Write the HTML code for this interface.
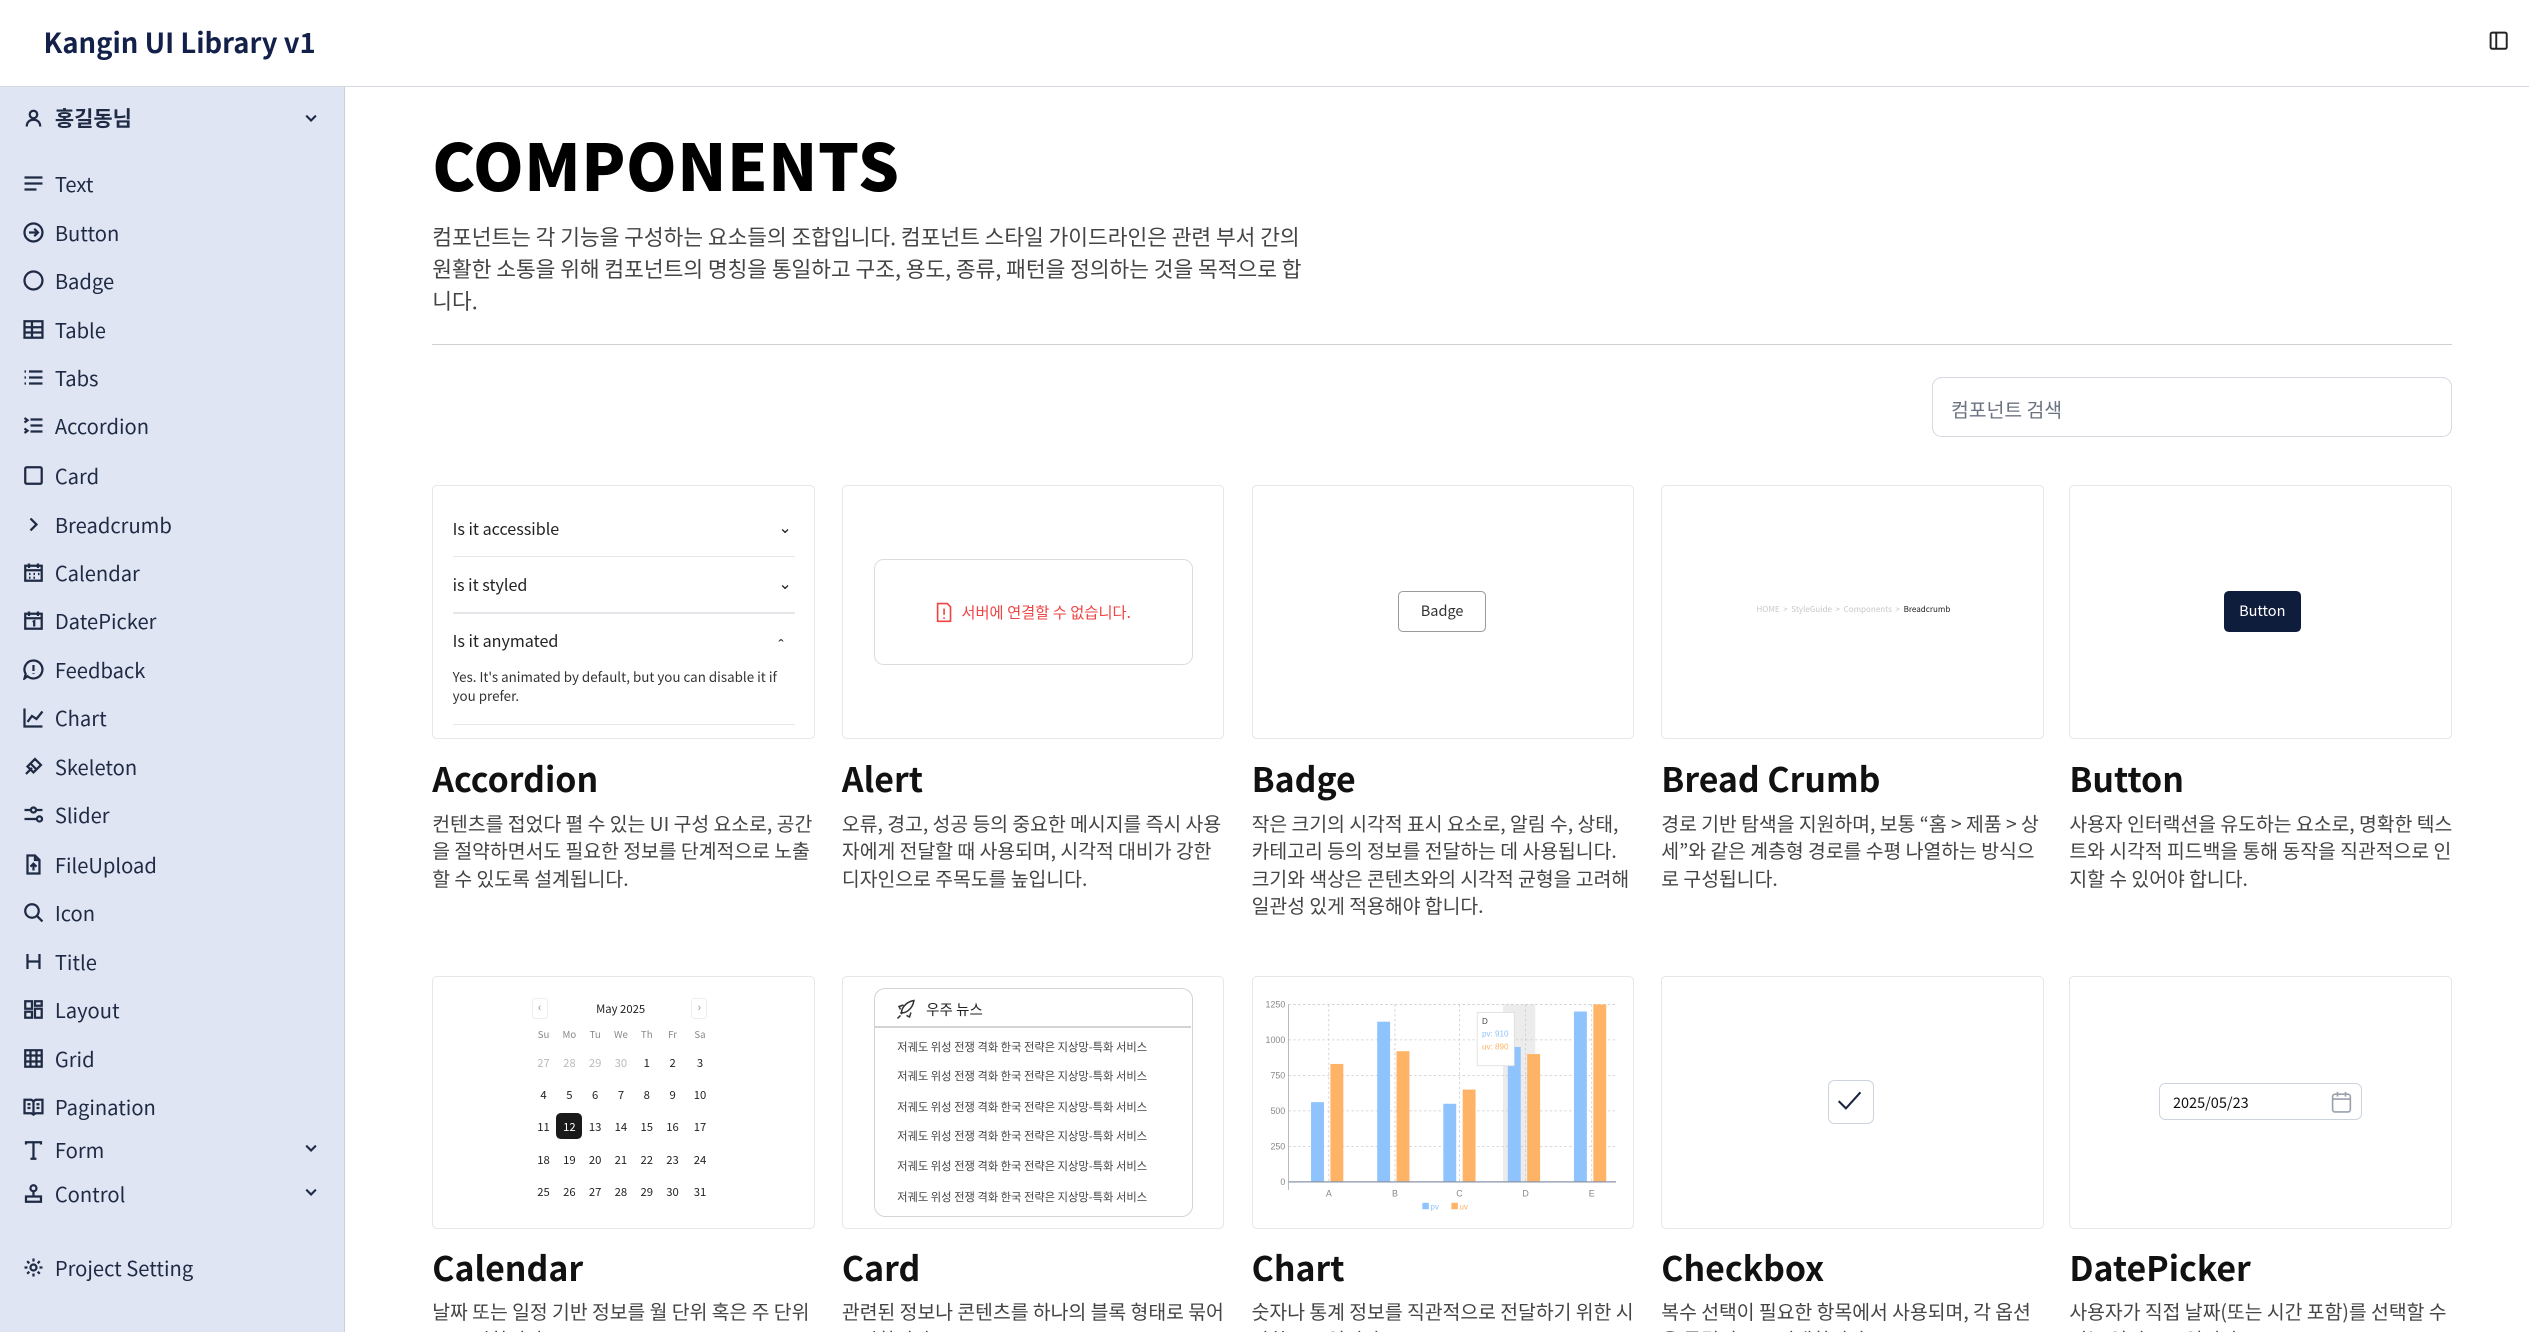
<!DOCTYPE html>
<html><head><meta charset="utf-8"><style>
*{box-sizing:border-box;margin:0;padding:0}
html,body{width:2529px;height:1332px;overflow:hidden;background:#fff}
#root{zoom:1.6129;width:1568px;height:826px;position:relative;font-family:"Noto Sans CJK KR","Liberation Sans",sans-serif;color:#1f2a44}
.hdr{position:absolute;left:0;top:0;width:1568px;height:54px;border-bottom:1px solid #d6d9e0;background:#fff}
.hdr h1{position:absolute;left:27px;top:13px;font-size:17px;font-weight:700;color:#12204a}
.side{position:absolute;left:0;top:54px;width:214px;height:772px;background:#dfe5f2;border-right:1px solid #c9cfdc}
.si{position:absolute;left:14px;font-size:12.5px;color:#1f2a44;display:flex;align-items:center;height:18px}
.si svg{width:13px;height:13px;margin-right:7px;stroke:#1f2a44;fill:none;stroke-width:1.5}
.chev{position:absolute;left:188px;width:10px;height:10px}
.title{position:absolute;left:268px;top:72px;font-size:40px;font-weight:900;color:#000;letter-spacing:0.3px}
.intro{position:absolute;left:268px;top:137px;width:548px;font-size:13.3px;line-height:20px;color:#444}
.hr{position:absolute;left:268px;top:213px;width:1252px;height:1px;background:#d0d0d0}
.search{position:absolute;left:1198px;top:234px;width:322px;height:37px;border:1px solid #d5d9e0;border-radius:6px;font-size:12px;color:#6b7280;padding:10px 11px}
.card{position:absolute;width:237px;height:157px;border:1px solid #e6e7ea;border-radius:3px;background:#fff;overflow:hidden}
.ct{position:absolute;font-size:21px;font-weight:700;color:#111}
.cd{position:absolute;width:238px;font-size:12px;line-height:17px;color:#444}
.acc{position:absolute;left:12px;font-size:10px;color:#222}
.accl{position:absolute;left:12px;width:212px;height:1px;background:#e4e6ea}
.cal{position:absolute;font-size:7px;color:#222;width:14px;text-align:center}
.news{position:absolute;left:14px;font-size:7px;color:#444}
</style></head><body><div id="root">
<div class="hdr"><h1>Kangin UI Library v1</h1>
<svg style="position:absolute;left:1543px;top:19px" width="12" height="12" viewBox="0 0 12 12" fill="none" stroke="#222" stroke-width="1.2"><rect x="1" y="1" width="10" height="10" rx="1"/><line x1="4.5" y1="1" x2="4.5" y2="11"/></svg></div>
<div class="side"></div>
<div class="si" style="top:64px;font-weight:700;font-size:13px"><svg viewBox="0 0 14 14"><circle cx="7" cy="5" r="2.5"/><path d="M2.5 13c0-3 2-4.5 4.5-4.5s4.5 1.5 4.5 4.5"/></svg>홍길동님</div>
<svg class="chev" style="top:68px" viewBox="0 0 10 10" fill="none" stroke="#1f2a44" stroke-width="1.3"><path d="M2 3.5l3 3 3-3"/></svg>
<div class="si" style="top:105px"><svg viewBox="0 0 14 14"><path d="M1 3h12M1 7h12M1 11h8"/></svg>Text</div>
<div class="si" style="top:135px"><svg viewBox="0 0 14 14"><circle cx="7" cy="7" r="6"/><path d="M4 7h6M7.5 4.5L10 7l-2.5 2.5"/></svg>Button</div>
<div class="si" style="top:165px"><svg viewBox="0 0 14 14"><circle cx="7" cy="7" r="6"/></svg>Badge</div>
<div class="si" style="top:195px"><svg viewBox="0 0 14 14"><rect x="1" y="1.5" width="12" height="11"/><path d="M1 5.5h12M1 9h12M6 1.5v11"/></svg>Table</div>
<div class="si" style="top:225px"><svg viewBox="0 0 14 14"><path d="M1 3h1M1 7h1M1 11h1M4 3h9M4 7h9M4 11h9"/></svg>Tabs</div>
<div class="si" style="top:255px"><svg viewBox="0 0 14 14"><path d="M1 2l2 1.5L1 5M1 9l2 1.5L1 12M5 3h8M5 7h8M5 11h8"/></svg>Accordion</div>
<div class="si" style="top:286px"><svg viewBox="0 0 14 14"><rect x="1.5" y="1.5" width="11" height="11" rx="1"/></svg>Card</div>
<div class="si" style="top:316px"><svg viewBox="0 0 14 14"><path d="M5 3l4 4-4 4"/></svg>Breadcrumb</div>
<div class="si" style="top:346px"><svg viewBox="0 0 14 14"><rect x="1.5" y="2.5" width="11" height="10"/><path d="M1.5 5.5h11M4 1v3M10 1v3M4 8h1M7 8h1M10 8h1M4 10.5h1M7 10.5h1"/></svg>Calendar</div>
<div class="si" style="top:376px"><svg viewBox="0 0 14 14"><rect x="1.5" y="2.5" width="11" height="10"/><path d="M1.5 5.5h11M4 1v3M10 1v3M6.5 8l1-.5v3.5"/></svg>DatePicker</div>
<div class="si" style="top:406px"><svg viewBox="0 0 14 14"><path d="M7 1a6 6 0 1 1-4 10.5L1 13l.8-3A6 6 0 0 1 7 1zM7 4v4M7 9.5v.5"/></svg>Feedback</div>
<div class="si" style="top:436px"><svg viewBox="0 0 14 14"><path d="M1 1v12h12M3 10l3-4 3 2 4-5"/></svg>Chart</div>
<div class="si" style="top:466px"><svg viewBox="0 0 14 14"><path d="M2 12l4-4M5 5l4 4M8 2l4 4-5 5-4-4z"/></svg>Skeleton</div>
<div class="si" style="top:496px"><svg viewBox="0 0 14 14"><path d="M1 4h4M9 4h4M1 10h8M13 10h0"/><circle cx="7" cy="4" r="1.7"/><circle cx="11" cy="10" r="1.7"/></svg>Slider</div>
<div class="si" style="top:527px"><svg viewBox="0 0 14 14"><path d="M3 1h5l3 3v9H3zM8 1v3h3M7 11V7M5 8.5L7 6.5l2 2"/></svg>FileUpload</div>
<div class="si" style="top:557px"><svg viewBox="0 0 14 14"><circle cx="6" cy="6" r="4.5"/><path d="M9.5 9.5L13 13"/></svg>Icon</div>
<div class="si" style="top:587px"><svg viewBox="0 0 14 14"><path d="M3 2v10M11 2v10M3 7h8"/></svg>Title</div>
<div class="si" style="top:617px"><svg viewBox="0 0 14 14"><rect x="1.5" y="1.5" width="4.5" height="5"/><rect x="8" y="1.5" width="4.5" height="3"/><rect x="1.5" y="8.5" width="4.5" height="4"/><rect x="8" y="6.5" width="4.5" height="6"/></svg>Layout</div>
<div class="si" style="top:647px"><svg viewBox="0 0 14 14"><rect x="1.5" y="1.5" width="11" height="11"/><path d="M1.5 5h11M1.5 9h11M5 1.5v11M9 1.5v11"/></svg>Grid</div>
<div class="si" style="top:677px"><svg viewBox="0 0 14 14"><path d="M1 2.5h4.5l1.5 1 1.5-1H13v9H8.5L7 12.5 5.5 11.5H1zM7 3.5v9M3 5.5h2M3 8h2M9 5.5h2M9 8h2"/></svg>Pagination</div>
<div class="si" style="top:704px"><svg viewBox="0 0 14 14"><path d="M2 3V1.5h10V3M7 1.5v11M5 12.5h4"/></svg>Form</div>
<svg class="chev" style="top:707px" viewBox="0 0 10 10" fill="none" stroke="#1f2a44" stroke-width="1.3"><path d="M2 3.5l3 3 3-3"/></svg>
<div class="si" style="top:731px"><svg viewBox="0 0 14 14"><circle cx="7" cy="3.5" r="2"/><path d="M7 5.5v3M2 9h10v3.5H2z"/></svg>Control</div>
<svg class="chev" style="top:734px" viewBox="0 0 10 10" fill="none" stroke="#1f2a44" stroke-width="1.3"><path d="M2 3.5l3 3 3-3"/></svg>
<div class="si" style="top:777px"><svg viewBox="0 0 14 14"><circle cx="7" cy="7" r="2"/><path d="M7 1v2M7 11v2M1 7h2M11 7h2M2.8 2.8l1.4 1.4M9.8 9.8l1.4 1.4M2.8 11.2l1.4-1.4M9.8 4.2l1.4-1.4"/></svg>Project Setting</div>

<div class="title">COMPONENTS</div>
<div class="intro">컴포넌트는 각 기능을 구성하는 요소들의 조합입니다. 컴포넌트 스타일 가이드라인은 관련 부서 간의<br>원활한 소통을 위해 컴포넌트의 명칭을 통일하고 구조, 용도, 종류, 패턴을 정의하는 것을 목적으로 합<br>니다.</div>
<div class="hr"></div>
<div class="search">컴포넌트 검색</div>

<!-- row 1 -->
<div class="card" style="left:268px;top:301px">
 <div class="acc" style="top:18px">Is it accessible</div><div class="acc" style="left:214px;top:17px">⌄</div>
 <div class="accl" style="top:43px"></div>
 <div class="acc" style="top:53px">is it styled</div><div class="acc" style="left:214px;top:52px">⌄</div>
 <div class="accl" style="top:78px"></div>
 <div class="acc" style="top:88px">Is it anymated</div><div class="acc" style="left:214px;top:90px">ˆ</div>
 <div class="acc" style="top:112px;font-size:8.3px;line-height:12px;width:215px;color:#333">Yes. It's animated by default, but you can disable it if you prefer.</div>
 <div class="accl" style="top:147px"></div>
</div>
<div class="card" style="left:522px;top:301px">
 <div style="position:absolute;left:19px;top:45px;width:198px;height:66px;border:1px solid #dcdcdc;border-radius:6px;display:flex;align-items:center;justify-content:center;color:#ef4444;font-size:9.5px">
 <svg width="10" height="13" viewBox="0 0 10 13" fill="none" stroke="#ef4444" stroke-width="1" style="margin-right:6px"><path d="M1 1h6l2 2v9H1z"/><path d="M5 4v4M5 9.5v1"/></svg>서버에 연결할 수 없습니다.</div>
</div>
<div class="card" style="left:776px;top:301px">
 <div style="position:absolute;left:90px;top:65px;width:55px;height:25px;border:1px solid #9a9a9a;border-radius:3px;font-size:9px;color:#333;text-align:center;line-height:23px">Badge</div>
</div>
<div class="card" style="left:1030px;top:301px">
 <div style="position:absolute;left:0;top:73px;width:237px;text-align:center;font-size:5px;color:#c8c8c8">HOME &nbsp;&gt;&nbsp; StyleGuide &nbsp;&gt;&nbsp; Components &nbsp;&gt;&nbsp; <span style="color:#222">Breadcrumb</span></div>
</div>
<div class="card" style="left:1283px;top:301px">
 <div style="position:absolute;left:95px;top:65px;width:48px;height:25px;background:#0f1d3d;border-radius:3px;font-size:9px;color:#fff;text-align:center;line-height:25px">Button</div>
</div>
<div class="ct" style="left:268px;top:467px">Accordion</div>
<div class="ct" style="left:522px;top:467px">Alert</div>
<div class="ct" style="left:776px;top:467px">Badge</div>
<div class="ct" style="left:1030px;top:467px">Bread Crumb</div>
<div class="ct" style="left:1283px;top:467px">Button</div>
<div class="cd" style="left:268px;top:502px">컨텐츠를 접었다 펼 수 있는 UI 구성 요소로, 공간을 절약하면서도 필요한 정보를 단계적으로 노출할 수 있도록 설계됩니다.</div>
<div class="cd" style="left:522px;top:502px">오류, 경고, 성공 등의 중요한 메시지를 즉시 사용자에게 전달할 때 사용되며, 시각적 대비가 강한 디자인으로 주목도를 높입니다.</div>
<div class="cd" style="left:776px;top:502px">작은 크기의 시각적 표시 요소로, 알림 수, 상태, 카테고리 등의 정보를 전달하는 데 사용됩니다. 크기와 색상은 콘텐츠와의 시각적 균형을 고려해 일관성 있게 적용해야 합니다.</div>
<div class="cd" style="left:1030px;top:502px">경로 기반 탐색을 지원하며, 보통 “홈 &gt; 제품 &gt; 상세”와 같은 계층형 경로를 수평 나열하는 방식으로 구성됩니다.</div>
<div class="cd" style="left:1283px;top:502px">사용자 인터랙션을 유도하는 요소로, 명확한 텍스트와 시각적 피드백을 통해 동작을 직관적으로 인지할 수 있어야 합니다.</div>

<!-- row 2 -->
<div class="card" style="left:268px;top:605px">
 <div style="position:absolute;left:61px;top:13px;width:10px;height:13px;border:1px solid #eee;border-radius:2px;font-size:7px;color:#888;text-align:center;line-height:11px">‹</div>
 <div style="position:absolute;left:101px;top:15px;font-size:7px;color:#222">May 2025</div>
 <div style="position:absolute;left:160px;top:13px;width:10px;height:13px;border:1px solid #eee;border-radius:2px;font-size:7px;color:#888;text-align:center;line-height:11px">›</div>
</div>
<div class="card" style="left:522px;top:605px">
 <div style="position:absolute;left:19px;top:7px;width:198px;height:142px;border:1px solid #d4d4d4;border-radius:7px">
  <svg style="position:absolute;left:13px;top:6px" width="13" height="13" viewBox="0 0 14 14" fill="none" stroke="#333" stroke-width="1"><path d="M4 10c-1-3 2-8 8-9-1 6-6 9-9 8zM3 11l-2 2M5 4L2 5l1 2M10 9l-1 3-2-1"/></svg>
  <div style="position:absolute;left:32px;top:6px;font-size:9px;color:#222">우주 뉴스</div>
  <div style="position:absolute;left:0;top:23px;width:196px;height:1px;background:#d4d4d4"></div>
  <div class="news" style="top:31px">저궤도 위성 전쟁 격화 한국 전략은 지상망-특화 서비스</div>
  <div class="news" style="top:49px">저궤도 위성 전쟁 격화 한국 전략은 지상망-특화 서비스</div>
  <div class="news" style="top:68px">저궤도 위성 전쟁 격화 한국 전략은 지상망-특화 서비스</div>
  <div class="news" style="top:86px">저궤도 위성 전쟁 격화 한국 전략은 지상망-특화 서비스</div>
  <div class="news" style="top:105px">저궤도 위성 전쟁 격화 한국 전략은 지상망-특화 서비스</div>
  <div class="news" style="top:124px">저궤도 위성 전쟁 격화 한국 전략은 지상망-특화 서비스</div>
 </div>
</div>
<div class="card" style="left:776px;top:605px">
 <svg width="237" height="157" viewBox="0 0 237 157" style="position:absolute;left:0;top:0" font-family="Liberation Sans" font-size="5.5">
  <rect x="155" y="17" width="20" height="110" fill="#ececec"/>
  <g stroke="#ccc" stroke-dasharray="1.5 1.5" stroke-width="0.5">
   <line x1="22" y1="17" x2="225" y2="17"/><line x1="22" y1="39" x2="225" y2="39"/><line x1="22" y1="61" x2="225" y2="61"/><line x1="22" y1="83" x2="225" y2="83"/><line x1="22" y1="105" x2="225" y2="105"/>
   <line x1="47" y1="17" x2="47" y2="127"/><line x1="88" y1="17" x2="88" y2="127"/><line x1="128" y1="17" x2="128" y2="127"/><line x1="169" y1="17" x2="169" y2="127"/><line x1="210" y1="17" x2="210" y2="127"/>
  </g>
  <g fill="#8fc3fd"><rect x="36" y="77.6" width="8" height="49.4"/><rect x="77" y="27.7" width="8" height="99.3"/><rect x="118" y="78.6" width="8" height="48.4"/><rect x="158" y="43.4" width="8" height="83.6"/><rect x="199" y="21.4" width="8" height="105.6"/></g>
  <g fill="#ffb366"><rect x="48" y="53.9" width="8" height="73.1"/><rect x="89" y="46" width="8" height="81"/><rect x="130" y="69.8" width="8" height="57.2"/><rect x="170" y="47.8" width="8" height="79.2"/><rect x="211" y="17" width="8" height="110"/></g>
  <line x1="22" y1="127" x2="225" y2="127" stroke="#8a94a8" stroke-width="0.8"/>
  <line x1="22" y1="17" x2="22" y2="132" stroke="#aaa" stroke-width="0.5"/>
  <g fill="#888" text-anchor="end"><text x="20" y="19">1250</text><text x="20" y="41">1000</text><text x="20" y="63">750</text><text x="20" y="85">500</text><text x="20" y="107">250</text><text x="20" y="129">0</text></g>
  <g fill="#888" text-anchor="middle"><text x="47" y="136">A</text><text x="88" y="136">B</text><text x="128" y="136">C</text><text x="169" y="136">D</text><text x="210" y="136">E</text></g>
  <rect x="139" y="22" width="23" height="33" fill="#fff" stroke="#ddd" stroke-width="0.5"/>
  <text x="142" y="29" fill="#444" font-size="5">D</text><text x="142" y="37" fill="#8fc3fd" font-size="5">pv: 910</text><text x="142" y="45" fill="#ffb366" font-size="5">uv: 890</text>
  <rect x="105" y="140" width="4" height="4" fill="#8fc3fd"/><text x="110" y="144" fill="#8fc3fd" font-size="5">pv</text>
  <rect x="123" y="140" width="4" height="4" fill="#ffb366"/><text x="128" y="144" fill="#ffb366" font-size="5">uv</text>
 </svg>
</div>
<div class="card" style="left:1030px;top:605px">
 <div style="position:absolute;left:103px;top:64px;width:28px;height:27px;border:1px solid #cdd3de;border-radius:4px"><svg width="26" height="25" viewBox="0 0 26 25" fill="none" stroke="#1a2340" stroke-width="1.3"><path d="M6 12.5l4.5 4.5 9-10"/></svg></div>
</div>
<div class="card" style="left:1283px;top:605px">
 <div style="position:absolute;left:55px;top:66px;width:126px;height:23px;border:1px solid #cdd3de;border-radius:4px;font-size:9px;color:#111;padding:5px 8px">2025/05/23
  <svg style="position:absolute;left:106px;top:4px" width="13" height="14" viewBox="0 0 13 14" fill="none" stroke="#9aa1ad" stroke-width="1"><rect x="1" y="2" width="11" height="11" rx="1.5"/><path d="M1 5h11M4 0.5v3M9 0.5v3"/></svg></div>
</div>
<div class="ct" style="left:268px;top:770px">Calendar</div>
<div class="ct" style="left:522px;top:770px">Card</div>
<div class="ct" style="left:776px;top:770px">Chart</div>
<div class="ct" style="left:1030px;top:770px">Checkbox</div>
<div class="ct" style="left:1283px;top:770px">DatePicker</div>
<div class="cd" style="left:268px;top:805px">날짜 또는 일정 기반 정보를 월 단위 혹은 주 단위로 표시합니다.</div>
<div class="cd" style="left:522px;top:805px">관련된 정보나 콘텐츠를 하나의 블록 형태로 묶어 표시합니다.</div>
<div class="cd" style="left:776px;top:805px">숫자나 통계 정보를 직관적으로 전달하기 위한 시각화 요소입니다.</div>
<div class="cd" style="left:1030px;top:805px">복수 선택이 필요한 항목에서 사용되며, 각 옵션을 독립적으로 선택합니다.</div>
<div class="cd" style="left:1283px;top:805px">사용자가 직접 날짜(또는 시간 포함)를 선택할 수 있는 입력 요소입니다.</div>

<!-- calendar cells -->
<div style="position:absolute;left:268px;top:604px">
 <div class="cal" style="left:62px;top:33px;color:#888;font-size:6px">Su</div><div class="cal" style="left:78px;top:33px;color:#888;font-size:6px">Mo</div><div class="cal" style="left:94px;top:33px;color:#888;font-size:6px">Tu</div><div class="cal" style="left:110px;top:33px;color:#888;font-size:6px">We</div><div class="cal" style="left:126px;top:33px;color:#888;font-size:6px">Th</div><div class="cal" style="left:142px;top:33px;color:#888;font-size:6px">Fr</div><div class="cal" style="left:159px;top:33px;color:#888;font-size:6px">Sa</div>
 <div class="cal" style="left:62px;top:50px;color:#bbb">27</div><div class="cal" style="left:78px;top:50px;color:#bbb">28</div><div class="cal" style="left:94px;top:50px;color:#bbb">29</div><div class="cal" style="left:110px;top:50px;color:#bbb">30</div><div class="cal" style="left:126px;top:50px">1</div><div class="cal" style="left:142px;top:50px">2</div><div class="cal" style="left:159px;top:50px">3</div>
 <div class="cal" style="left:62px;top:70px">4</div><div class="cal" style="left:78px;top:70px">5</div><div class="cal" style="left:94px;top:70px">6</div><div class="cal" style="left:110px;top:70px">7</div><div class="cal" style="left:126px;top:70px">8</div><div class="cal" style="left:142px;top:70px">9</div><div class="cal" style="left:159px;top:70px">10</div>
 <div class="cal" style="left:62px;top:90px">11</div><div style="position:absolute;left:77px;top:86px;width:16px;height:16px;background:#1a1a1a;border-radius:3px"></div><div class="cal" style="left:78px;top:90px;color:#fff">12</div><div class="cal" style="left:94px;top:90px">13</div><div class="cal" style="left:110px;top:90px">14</div><div class="cal" style="left:126px;top:90px">15</div><div class="cal" style="left:142px;top:90px">16</div><div class="cal" style="left:159px;top:90px">17</div>
 <div class="cal" style="left:62px;top:110px">18</div><div class="cal" style="left:78px;top:110px">19</div><div class="cal" style="left:94px;top:110px">20</div><div class="cal" style="left:110px;top:110px">21</div><div class="cal" style="left:126px;top:110px">22</div><div class="cal" style="left:142px;top:110px">23</div><div class="cal" style="left:159px;top:110px">24</div>
 <div class="cal" style="left:62px;top:130px">25</div><div class="cal" style="left:78px;top:130px">26</div><div class="cal" style="left:94px;top:130px">27</div><div class="cal" style="left:110px;top:130px">28</div><div class="cal" style="left:126px;top:130px">29</div><div class="cal" style="left:142px;top:130px">30</div><div class="cal" style="left:159px;top:130px">31</div>
</div>
</div></body></html>
